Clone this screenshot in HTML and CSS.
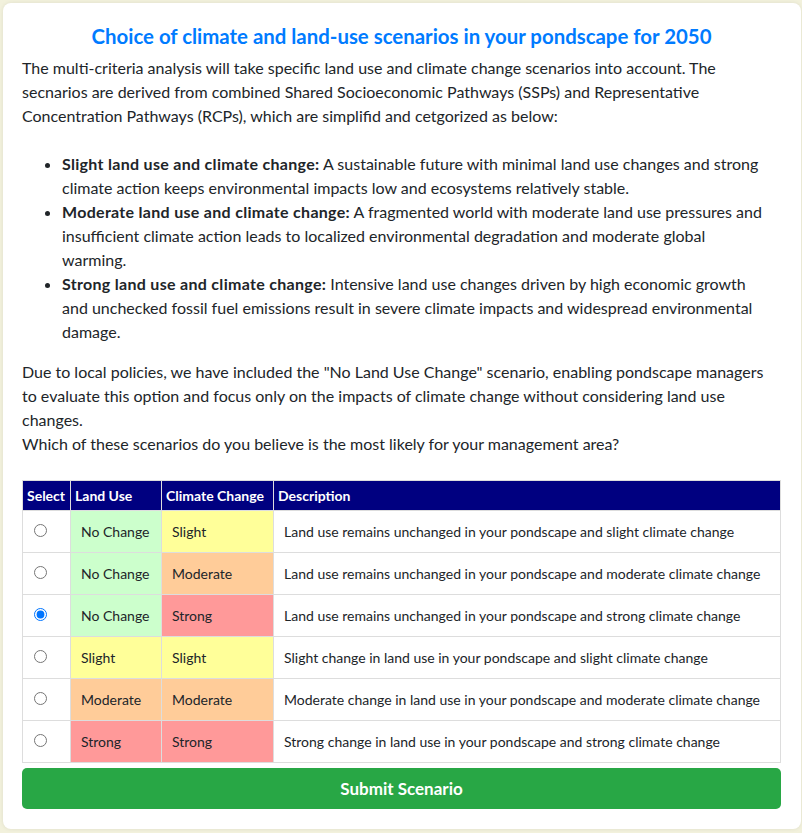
FILE: index.html
```html
<!DOCTYPE html>
<html lang="en">
<head>
    <meta charset="UTF-8">
    <meta name="viewport" content="width=device-width, initial-scale=1.0">
    <title>Climate and land-use scenarios</title>
    <link rel="stylesheet" href="styles.css">
</head>
<body>
    <div class="card">
        <h2 class="title">Choice of climate and land-use scenarios in your pondscape for 2050</h2>
        <p class="intro">The multi-criteria analysis will take specific land use and climate change scenarios into account. The secnarios are derived from combined Shared Socioeconomic Pathways (SSPs) and Representative Concentration Pathways (RCPs), which are simplifid and cetgorized as below:</p>
        <ul class="scenarios">
            <li><strong>Slight land use and climate change:</strong> A sustainable future with minimal land use changes and strong climate action keeps environmental impacts low and ecosystems relatively stable.</li>
            <li><strong>Moderate land use and climate change:</strong> A fragmented world with moderate land use pressures and insufficient climate action leads to localized environmental degradation and moderate global<br>warming.</li>
            <li><strong>Strong land use and climate change:</strong> Intensive land use changes driven by high economic growth<br>and unchecked fossil fuel emissions result in severe climate impacts and widespread environmental damage.</li>
        </ul>
        <p class="note">Due to local policies, we have included the "No Land Use Change" scenario, enabling pondscape managers to evaluate this option and focus only on the impacts of climate change without considering land use changes.<br>Which of these scenarios do you believe is the most likely for your management area?</p>

        <table class="choices">
            <thead>
                <tr>
                    <th class="col-select">Select</th>
                    <th class="col-land">Land Use</th>
                    <th class="col-climate">Climate Change</th>
                    <th>Description</th>
                </tr>
            </thead>
            <tbody>
                <tr>
                    <td class="radio"><input type="radio" name="scenario" value="1"></td>
                    <td class="none">No Change</td>
                    <td class="slight">Slight</td>
                    <td>Land use remains unchanged in your pondscape and slight climate change</td>
                </tr>
                <tr>
                    <td class="radio"><input type="radio" name="scenario" value="2"></td>
                    <td class="none">No Change</td>
                    <td class="moderate">Moderate</td>
                    <td>Land use remains unchanged in your pondscape and moderate climate change</td>
                </tr>
                <tr>
                    <td class="radio"><input type="radio" name="scenario" value="3" checked></td>
                    <td class="none">No Change</td>
                    <td class="strong">Strong</td>
                    <td>Land use remains unchanged in your pondscape and strong climate change</td>
                </tr>
                <tr>
                    <td class="radio"><input type="radio" name="scenario" value="4"></td>
                    <td class="slight">Slight</td>
                    <td class="slight">Slight</td>
                    <td>Slight change in land use in your pondscape and slight climate change</td>
                </tr>
                <tr>
                    <td class="radio"><input type="radio" name="scenario" value="5"></td>
                    <td class="moderate">Moderate</td>
                    <td class="moderate">Moderate</td>
                    <td>Moderate change in land use in your pondscape and moderate climate change</td>
                </tr>
                <tr>
                    <td class="radio"><input type="radio" name="scenario" value="6"></td>
                    <td class="strong">Strong</td>
                    <td class="strong">Strong</td>
                    <td>Strong change in land use in your pondscape and strong climate change</td>
                </tr>
            </tbody>
        </table>

        <button class="submit">Submit Scenario</button>
    </div>
</body>
</html>
```

FILE: styles.css
```css
body {
    margin: 0;
    padding: 3px 1px 3px 3px;
    background: #f2f1dc;
    font-family: Lato, "Noto Sans", sans-serif;
    color: #212529;
}
.card {
    background: white;
    border-radius: 8px;
    padding: 21px 20px 20px 19px;
    box-shadow: 0 0 4px rgba(0, 0, 0, 0.08);
}
.title {
    margin: 0 0 8px;
    text-align: center;
    color: #007bff;
    font-size: 20.4px;
    line-height: 24px;
}
.intro, .note {
    margin: 0;
    font-size: 16px;
    line-height: 24px;
}
.scenarios {
    margin: 24px 0 16px;
    padding-left: 40px;
    font-size: 16px;
    line-height: 24px;
}
.scenarios strong {
    letter-spacing: 0.3px;
}
.choices {
    width: 100%;
    margin-top: 24px;
    border-collapse: collapse;
    font-size: 14px;
}
.choices th {
    background: #000080;
    color: white;
    text-align: left;
    padding: 4px;
    line-height: 21px;
    border: 1px solid #ddd;
}
.choices td {
    padding: 10px;
    line-height: 21px;
    border: 1px solid #ddd;
}
.col-select { width: 39px; }
.col-land { width: 82px; }
.col-climate { width: 103px; }
.choices td.radio {
    padding: 10px 8px;
    vertical-align: top;
}
.radio input {
    margin: 2px 0 0 3px;
}
.none { background: #ccffcc; }
.slight { background: #ffff99; }
.moderate { background: #ffcc99; }
.strong { background: #ff9999; }
.submit {
    display: block;
    width: 100%;
    margin-top: 5px;
    padding: 10px;
    background: #28a745;
    color: white;
    border: none;
    border-radius: 5px;
    font-family: inherit;
    font-size: 17px;
    font-weight: bold;
    line-height: 21px;
    cursor: pointer;
}
```
